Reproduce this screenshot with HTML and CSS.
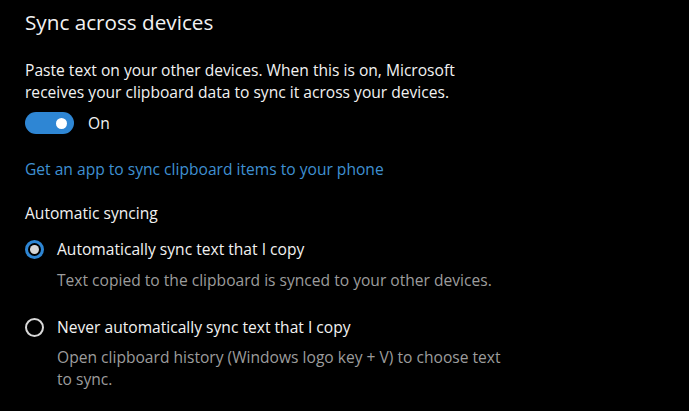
FILE: index.html
```html
<!DOCTYPE html>
<html lang="en">
<head>
<meta charset="utf-8">
<title>Clipboard – Sync across devices</title>
<link rel="stylesheet" href="styles.css">
</head>
<body>
<main class="page">
  <h1 class="title">Sync across devices</h1>
  <p class="intro">Paste text on your other devices. When this is on, Microsoft receives your clipboard data to sync it across your devices.</p>
  <div class="toggle-row">
    <span class="toggle" role="switch" aria-checked="true"><span class="knob"></span></span>
    <span class="toggle-label">On</span>
  </div>
  <a class="link" href="#">Get an app to sync clipboard items to your phone</a>
  <div class="group-label">Automatic syncing</div>
  <div class="option">
    <div class="radio-row">
      <span class="radio checked"></span>
      <span class="radio-label">Automatically sync text that I copy</span>
    </div>
    <p class="desc">Text copied to the clipboard is synced to your other devices.</p>
  </div>
  <div class="option second">
    <div class="radio-row">
      <span class="radio"></span>
      <span class="radio-label">Never automatically sync text that I copy</span>
    </div>
    <p class="desc narrow">Open clipboard history (Windows logo key + V) to choose text to sync.</p>
  </div>
</main>
</body>
</html>
```

FILE: styles.css
```css
html, body {
  margin: 0;
  padding: 0;
  background: #000;
}
body {
  font-family: "Open Sans", "Noto Sans", "Liberation Sans", sans-serif;
  color: #f2f2f2;
  width: 689px;
  height: 411px;
  overflow: hidden;
}
.page {
  display: flex;
  flex-direction: column;
  align-items: flex-start;
  padding-left: 25px;
}
.title {
  margin: 7px 0 0;
  font-size: 20.7px;
  font-weight: 400;
  line-height: 30px;
  color: #f2f2f2;
}
.intro {
  margin: 22px 0 0;
  width: 460px;
  font-size: 15.6px;
  line-height: 22px;
}
.toggle-row {
  margin-top: 9px;
  display: flex;
  align-items: center;
  gap: 14px;
  height: 22px;
}
.toggle {
  width: 49px;
  height: 22px;
  border-radius: 11px;
  background: #2e86d4;
  position: relative;
  box-sizing: border-box;
}
.knob {
  position: absolute;
  width: 11px;
  height: 11px;
  border-radius: 50%;
  background: #fff;
  right: 7px;
  top: 5.5px;
}
.toggle-label {
  font-size: 15.6px;
  line-height: 22px;
}
.link {
  margin-top: 24px;
  font-size: 15.6px;
  line-height: 22px;
  color: #3f90d2;
  text-decoration: none;
}
.group-label {
  margin-top: 22px;
  font-size: 15.6px;
  line-height: 22px;
}
.option {
  margin-top: 14px;
  display: flex;
  flex-direction: column;
}
.option.second {
  margin-top: 25px;
}
.radio-row {
  display: flex;
  align-items: center;
  gap: 13px;
  height: 22px;
}
.radio {
  width: 19px;
  height: 19px;
  box-sizing: border-box;
  border-radius: 50%;
  border: 2px solid #d8d8d8;
  position: relative;
}
.radio.checked {
  border: 3px solid #2e86d4;
}
.radio.checked::after {
  content: "";
  position: absolute;
  left: 2px;
  top: 2px;
  width: 9px;
  height: 9px;
  border-radius: 50%;
  background: #d6d6d6;
}
.radio-label {
  font-size: 15.6px;
  line-height: 22px;
}
.desc {
  margin: 9px 0 0 32px;
  width: 540px;
  font-size: 15.6px;
  line-height: 22px;
  color: #9c9c9c;
}
.desc.narrow {
  width: 450px;
}
.option.second .desc {
  margin-top: 8px;
}
```
